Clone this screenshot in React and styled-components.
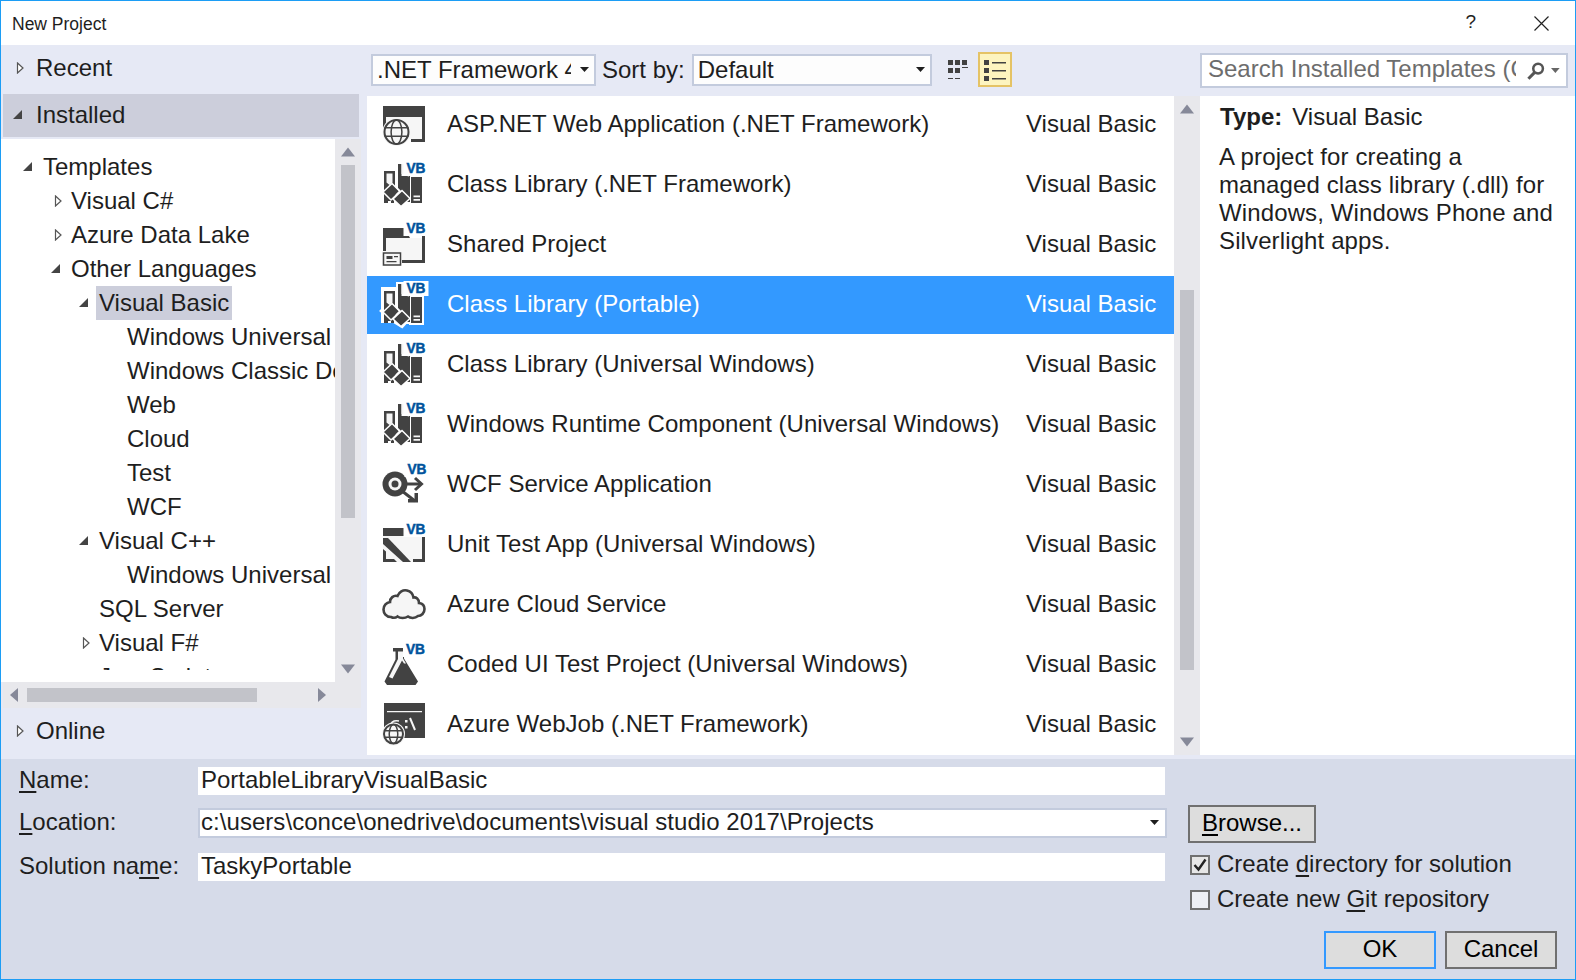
import React from "react";
import styled, { createGlobalStyle } from "styled-components";

const GlobalStyle = createGlobalStyle`
  html, body {
    margin: 0;
    padding: 0;
    background: #fff;
  }
  * {
    box-sizing: border-box;
  }
`;

const Win = styled.div`
  width: 1576px;
  height: 980px;
  border: 1px solid #1c9df5;
  background: #e6e9f5;
  display: flex;
  flex-direction: column;
  overflow: hidden;
  font-family: "Liberation Sans", Arial, sans-serif;
  font-size: 24px;
  color: #1e1e1e;
`;

const TitleBar = styled.div`
  height: 44px;
  flex: none;
  background: #fff;
  display: flex;
  align-items: center;
  padding: 0 26px 0 11px;
  font-size: 17.5px;
`;

const TitleText = styled.div`
  flex: 1;
  margin-top: 2px;
`;

const HelpMark = styled.div`
  font-size: 19px;
  margin-right: 58px;
  margin-bottom: 3px;
`;

const Main = styled.div`
  height: 714px;
  flex: none;
  display: flex;
`;

const LeftCol = styled.div`
  width: 360px;
  flex: none;
  display: flex;
  flex-direction: column;
`;

const SectionRow = styled.div`
  height: ${(p) => p.$h}px;
  flex: none;
  display: flex;
  align-items: center;
  padding-left: ${(p) => (p.$active ? 9 : 11)}px;
  padding-bottom: ${(p) => p.$pb}px;
  margin: ${(p) => (p.$active ? "0 2px 2px 2px" : "0")};
  background: ${(p) => (p.$active ? "#cccedb" : "transparent")};
`;

const HeaderSlot = styled.span`
  width: 24px;
  flex: none;
  display: flex;
  align-items: center;
`;

const TreeArea = styled.div`
  height: 543px;
  flex: none;
  display: flex;
`;

const Tree = styled.div`
  width: 334px;
  background: #fff;
  flex: none;
`;

const TreeClip = styled.div`
  height: 531px;
  overflow: hidden;
  padding-top: 11px;
  white-space: nowrap;
`;

const TreeRow = styled.div`
  height: 34px;
  display: flex;
  align-items: center;
  padding-left: ${(p) => 21 + p.$level * 28}px;
`;

const TreeSlot = styled.span`
  width: 21px;
  flex: none;
  display: flex;
  align-items: center;
`;

const TreeLabel = styled.span`
  line-height: 34px;
  background: ${(p) => (p.$selected ? "#cccedb" : "transparent")};
  padding: 0 3px;
  margin-left: -3px;
`;

const VBar = styled.div`
  width: ${(p) => p.$w}px;
  flex: none;
  background: #e8e8ec;
  display: flex;
  flex-direction: column;
  align-items: center;
`;

const BarEnd = styled.div`
  height: ${(p) => p.$h}px;
  flex: none;
  display: flex;
  align-items: center;
  justify-content: center;
`;

const BarTrack = styled.div`
  flex: 1;
  width: 100%;
  display: flex;
  flex-direction: column;
  align-items: center;
`;

const VThumb = styled.div`
  width: 14px;
  height: ${(p) => p.$h}px;
  margin-top: ${(p) => p.$top}px;
  background: #c2c3c9;
`;

const HBar = styled.div`
  height: 26px;
  flex: none;
  margin-left: 2px;
  background: #e8e8ec;
  display: flex;
  align-items: center;
  padding-left: 7px;
`;

const HThumb = styled.div`
  width: 230px;
  height: 14px;
  margin-left: 9px;
  margin-right: 61px;
  background: #c2c3c9;
`;

const MidCol = styled.div`
  width: 833px;
  flex: none;
  margin-left: 6px;
  display: flex;
  flex-direction: column;
`;

const Toolbar = styled.div`
  height: 51px;
  flex: none;
  display: flex;
  align-items: center;
  padding-bottom: 2px;
  padding-left: 4px;
`;

const Combo = styled.div`
  width: ${(p) => p.$w}px;
  height: 32px;
  flex: none;
  border: 2px solid #c3cbdd;
  background: #fdfdfd;
  display: flex;
  align-items: center;
  padding-left: 4px;
  padding-right: 5px;
  white-space: nowrap;
`;

const ComboText = styled.span`
  flex: 1;
  overflow: hidden;
  margin-right: 9px;
  line-height: 28px;
`;

const SortLabel = styled.span`
  margin: 0 7px 0 6px;
`;

const ViewIcon = styled.div`
  width: 34px;
  height: 35px;
  flex: none;
  margin-left: ${(p) => p.$ml}px;
  display: flex;
  align-items: center;
  justify-content: center;
  border: 2px solid ${(p) => (p.$on ? "#e5c365" : "transparent")};
  background: ${(p) => (p.$on ? "#fdf4bf" : "transparent")};
`;

const ListWrap = styled.div`
  height: 659px;
  flex: none;
  display: flex;
`;

const List = styled.div`
  width: 807px;
  flex: none;
  background: #fff;
  overflow: hidden;
`;

const Row = styled.div`
  height: 58px;
  margin-bottom: 2px;
  display: flex;
  align-items: center;
  padding-left: 15px;
  background: ${(p) => (p.$selected ? "#3399ff" : "transparent")};
  color: ${(p) => (p.$selected ? "#fff" : "#1e1e1e")};
`;

const RowIcon = styled.svg`
  width: 44px;
  height: 44px;
  flex: none;
  overflow: visible;
`;

const RowName = styled.div`
  width: 579px;
  flex: none;
  margin-left: 21px;
  margin-bottom: 2px;
  white-space: nowrap;
  letter-spacing: 0.03px;
`;

const RowLang = styled.div`
  white-space: nowrap;
  margin-bottom: 2px;
`;

const RightCol = styled.div`
  flex: 1;
  display: flex;
  flex-direction: column;
`;

const SearchBar = styled.div`
  height: 51px;
  flex: none;
  display: flex;
  align-items: flex-start;
  padding-top: 8px;
`;

const SearchBox = styled.div`
  width: 368px;
  height: 35px;
  border: 2px solid #c3cbdd;
  background: #fff;
  display: flex;
  align-items: center;
  padding-left: 6px;
  padding-right: 6px;
  color: #6d6d6d;
  white-space: nowrap;
`;

const SearchText = styled.span`
  width: 308px;
  flex: none;
  overflow: hidden;
  margin-right: 10px;
  line-height: 29px;
  margin-bottom: 4px;
`;

const Details = styled.div`
  height: 659px;
  flex: none;
  background: #fff;
  padding: 7px 14px 0 19px;
`;

const TypeLine = styled.div`
  height: 27px;
  line-height: 27px;
  padding-left: 1px;
  margin-bottom: 13px;
  white-space: nowrap;
`;

const TypeKey = styled.b`
  margin-right: 10px;
`;

const DescText = styled.div`
  line-height: 28px;
  letter-spacing: 0.12px;
`;

const Bottom = styled.div`
  height: 220px;
  flex: none;
  background: #d6dbe9;
  display: flex;
`;

const FormCol = styled.div`
  width: 1166px;
  flex: none;
  padding-top: 8px;
`;

const FormRow = styled.div`
  display: flex;
  align-items: center;
  height: ${(p) => p.$h}px;
  margin-top: ${(p) => p.$mt}px;
`;

const FieldLabel = styled.label`
  width: 197px;
  flex: none;
  padding-left: 18px;
  margin-bottom: 2px;
`;

const Field = styled.div`
  flex: 1;
  height: 100%;
  display: flex;
  align-items: center;
  background: #fff;
  padding-left: ${(p) => (p.$combo ? 1 : 3)}px;
  padding-right: 6px;
  padding-bottom: 2px;
  white-space: nowrap;
  letter-spacing: ${(p) => (p.$combo ? 0.05 : 0)}px;
  border: ${(p) => (p.$combo ? "2px solid #c3cbdd" : "none")};
  margin-right: ${(p) => (p.$combo ? 0 : 2)}px;
`;

const FieldText = styled.span`
  flex: 1;
`;

const ActionCol = styled.div`
  flex: 1;
  padding: 46px 18px 0 21px;
  display: flex;
  flex-direction: column;
`;

const DlgButton = styled.div`
  width: ${(p) => p.$w}px;
  height: 38px;
  flex: none;
  display: flex;
  align-items: center;
  justify-content: center;
  padding-bottom: 2px;
  background: #dddddd;
  color: #000;
  border: 2px solid ${(p) => (p.$primary ? "#3399ff" : "#707070")};
`;

const CheckRow = styled.div`
  display: flex;
  align-items: center;
  height: 20px;
  margin-top: ${(p) => p.$mt}px;
  margin-left: 2px;
  white-space: nowrap;
`;

const CheckBox = styled.span`
  width: 20px;
  height: 20px;
  flex: none;
  border: 2px solid #707070;
  background: ${(p) => (p.$on ? "#e6e6e6" : "#eef0f5")};
  margin-right: 7px;
  display: flex;
  align-items: center;
  justify-content: center;
`;

const CheckText = styled.span`
  margin-bottom: 2px;
`;

const ButtonRow = styled.div`
  display: flex;
  justify-content: flex-end;
  gap: 9px;
  margin-top: 21px;
`;

const Ul = styled.span`
  text-decoration: underline;
  text-underline-offset: 3px;
`;

const DARK = "#424242";
const LIGHT = "#f6f6f6";
const BLUE = "#00539c";

function Caret({ open }) {
  return (
    <svg width="12" height="12" viewBox="0 0 12 12">
      {open ? (
        <polygon points="10,1 10,10 1,10" fill="#444" />
      ) : (
        <polygon points="5.5,1 11,6 5.5,11" fill="#fff" stroke="#555" strokeWidth="1.2" />
      )}
    </svg>
  );
}

function DownCaret() {
  return (
    <svg width="9" height="5" viewBox="0 0 9 5">
      <polygon points="0,0 9,0 4.5,5" fill="#1e1e1e" />
    </svg>
  );
}

function ArrowGlyph({ dir }) {
  if (dir === "left" || dir === "right") {
    return (
      <svg width="8" height="14" viewBox="0 0 8 14">
        <polygon points={dir === "left" ? "8,0 8,14 0,7" : "0,0 8,7 0,14"} fill="#868999" />
      </svg>
    );
  }
  return (
    <svg width="14" height="10" viewBox="0 0 14 9">
      <polygon points={dir === "up" ? "7,0 14,9 0,9" : "0,0 14,0 7,9"} fill="#868999" />
    </svg>
  );
}

function VBBadge({ x = 24.5, y = 10, halo = "#fff" }) {
  return (
    <g>
      <rect x={x - 3} y={y - 12} width="25" height="15" fill={halo} />
      <text
        x={x}
        y={y}
        fontFamily="Liberation Sans, sans-serif"
        fontWeight="700"
        fontSize="14"
        fill={BLUE}
        stroke={BLUE}
        strokeWidth="0.5"
        textLength="19"
        lengthAdjust="spacingAndGlyphs"
      >
        VB
      </text>
    </g>
  );
}

function ClassLibIcon({ selected }) {
  return (
    <RowIcon viewBox="0 0 44 44">
      {selected && (
        <g fill="#fff" stroke="#fff" strokeWidth="4">
          <path d="M1 6h12v32H1z" />
          <path d="M16 1h12v38H16z" />
          <path d="M29 13h11v27H29z" />
          <path d="M0 28l10-10 8 7 11 8-9 10-10-6z" />
        </g>
      )}
      <path d="M2 8h11v30H2z" fill={DARK} />
      <path d="M4.5 10.5h6v9l-3 2.5-3-2.5z" fill={LIGHT} />
      <path d="M16 1h3.5v12H28v26H16z" fill={DARK} />
      <path d="M19.5 1h7l0 13-3-3h-4z" fill={LIGHT} />
      <path d="M29 14h11v26H29z" fill={DARK} />
      <path d="M31.5 32.5h6.5v1.7h-6.500zM31.5 36h6.5v1.7h-6.500z" fill={LIGHT} />
      <path d="M1 29l9-8.500 8 8-9 8.500z" fill={DARK} stroke="#fff" strokeWidth="1.5" />
      <path d="M11 36l9-8.500 8 8-9 8z" fill={DARK} stroke="#fff" strokeWidth="1.5" />
      <path d="M14 24l4 4-4 4" fill="none" stroke="#fff" strokeWidth="1.5" />
      <path d="M2 37h4v3H2zM9 38h3v2H9z" fill={DARK} />
      <VBBadge />
    </RowIcon>
  );
}

function Globe({ cx, cy, r }) {
  return (
    <g>
      <circle cx={cx} cy={cy} r={r + 2} fill={LIGHT} />
      <circle cx={cx} cy={cy} r={r} fill={LIGHT} stroke={DARK} strokeWidth="2" />
      <ellipse cx={cx} cy={cy} rx={r * 0.45} ry={r} fill="none" stroke={DARK} strokeWidth="1.5" />
      <path
        d={`M${cx - r} ${cy - r * 0.35}h${2 * r}M${cx - r} ${cy + r * 0.35}h${2 * r}`}
        stroke={DARK}
        strokeWidth="1.5"
      />
    </g>
  );
}

function WebIcon() {
  return (
    <RowIcon viewBox="0 0 44 44">
      <path d="M1 3h42v36H29v-3h11V14H4v12H1z" fill={DARK} />
      <path d="M4 14h36v22H4z" fill={LIGHT} />
      <Globe cx={14.5} cy={29} r={12} />
    </RowIcon>
  );
}

function SharedIcon() {
  return (
    <RowIcon viewBox="0 0 44 44">
      <path d="M1 5h24v4l3 6H1zM1 15h3v15H1zM40 13h3v27H19v-3h21z" fill={DARK} />
      <path d="M4 15h36v22H4z" fill={LIGHT} />
      <rect x="0" y="28" width="20" height="15" fill={LIGHT} />
      <rect x="1.5" y="30" width="17" height="12" fill="none" stroke={DARK} strokeWidth="1.5" />
      <path d="M4.5 33h6v3h-6zM4.5 38h10v1.2h-10zM12 33h4v1.2h-4z" fill={DARK} />
      <VBBadge y={10} />
    </RowIcon>
  );
}

function WcfIcon() {
  return (
    <RowIcon viewBox="0 0 44 44">
      <path d="M22 21h16" stroke={DARK} strokeWidth="3" />
      <path d="M33 15l6.5 6-6.5 6" fill="none" stroke={DARK} strokeWidth="3" />
      <path d="M20 28l13 10" stroke={DARK} strokeWidth="3" />
      <path d="M26 39.5h10v-9.5h-3.5v6H26z" fill={DARK} />
      <circle cx="13" cy="21" r="12.5" fill={DARK} />
      <circle cx="13" cy="21" r="6.5" fill={LIGHT} />
      <circle cx="13" cy="21" r="3.5" fill={DARK} />
      <VBBadge x={25.5} y={11} />
    </RowIcon>
  );
}

function UnitTestIcon() {
  return (
    <RowIcon viewBox="0 0 44 44">
      <path d="M1 5h42v34H1z" fill={LIGHT} />
      <path d="M1 5h25v8H1zM26 9h17v3H26z" fill={DARK} />
      <path d="M40 12h3v27H31v-3h9z" fill={DARK} />
      <path d="M1 15l5 0 23 24h-8L1 21z" fill={DARK} />
      <path d="M1 26l3 2.5v7.5h8l3 3H1z" fill={DARK} />
      <VBBadge y={11} />
    </RowIcon>
  );
}

function CloudIcon() {
  return (
    <RowIcon viewBox="0 0 44 44">
      <path
        d="M9 34C4 34 1.5 30 1.5 26.5C1.5 22.5 4.5 19.5 8 19C8 15 11.5 12 15.5 13C17 9 21 6.5 25 7.5C29 8.5 31 11.5 31.5 14.5C34 14 37 16 37 20C40.5 20.5 42.5 23 42.5 26C42.5 30 39.5 33 36 33C33 35.5 28.5 35.5 26 33.5C23 35.5 18 35.5 15.5 33.5C13.5 35 11 35 9 34z"
        fill={LIGHT}
        stroke={DARK}
        strokeWidth="2.6"
      />
    </RowIcon>
  );
}

function FlaskIcon() {
  return (
    <RowIcon viewBox="0 0 44 44">
      <path d="M11 5h13v3.5h-2v7l14 23-2.500 3.5H5L2.500 38.5l11-22V8.5H11z" fill={DARK} />
      <path d="M16 8.5h5v7l3 5-2 0-2-3-9.500 18-3.500-1.500 9-18z" fill={LIGHT} />
      <VBBadge x={24} y={11} />
    </RowIcon>
  );
}

function WebJobIcon() {
  return (
    <RowIcon viewBox="0 0 44 44">
      <rect x="2" y="0" width="41" height="35" fill={DARK} />
      <path d="M5 8h35v1.2H5z" fill={LIGHT} />
      <path d="M23 17h2.5v2.5H23zM23 23h2.5v2.5H23z" fill={LIGHT} />
      <path d="M28 15l5 12" stroke={LIGHT} strokeWidth="2" />
      <path d="M8 23c1-4 4-6 9-5" fill="none" stroke={LIGHT} strokeWidth="1.6" />
      <Globe cx={11.5} cy={31} r={9.5} />
    </RowIcon>
  );
}

const TREE = [
  { label: "Templates", level: 0, open: true },
  { label: "Visual C#", level: 1, closed: true },
  { label: "Azure Data Lake", level: 1, closed: true },
  { label: "Other Languages", level: 1, open: true },
  { label: "Visual Basic", level: 2, open: true, selected: true },
  { label: "Windows Universal", level: 3 },
  { label: "Windows Classic Desktop", level: 3 },
  { label: "Web", level: 3 },
  { label: "Cloud", level: 3 },
  { label: "Test", level: 3 },
  { label: "WCF", level: 3 },
  { label: "Visual C++", level: 2, open: true },
  { label: "Windows Universal", level: 3 },
  { label: "SQL Server", level: 2 },
  { label: "Visual F#", level: 2, closed: true },
  { label: "JavaScript", level: 2, closed: true },
];

const TEMPLATES = [
  { name: "ASP.NET Web Application (.NET Framework)", Icon: WebIcon },
  { name: "Class Library (.NET Framework)", Icon: ClassLibIcon },
  { name: "Shared Project", Icon: SharedIcon },
  { name: "Class Library (Portable)", Icon: ClassLibIcon, selected: true },
  { name: "Class Library (Universal Windows)", Icon: ClassLibIcon },
  { name: "Windows Runtime Component (Universal Windows)", Icon: ClassLibIcon },
  { name: "WCF Service Application", Icon: WcfIcon },
  { name: "Unit Test App (Universal Windows)", Icon: UnitTestIcon },
  { name: "Azure Cloud Service", Icon: CloudIcon },
  { name: "Coded UI Test Project (Universal Windows)", Icon: FlaskIcon },
  { name: "Azure WebJob (.NET Framework)", Icon: WebJobIcon },
];

export default function App() {
  return (
    <>
      <GlobalStyle />
      <Win>
        <TitleBar>
          <TitleText>New Project</TitleText>
          <HelpMark>?</HelpMark>
          <svg width="15" height="15" viewBox="0 0 15 15">
            <path d="M0.5 0.5l14 14M14.5 0.5l-14 14" stroke="#222" strokeWidth="1.2" />
          </svg>
        </TitleBar>
        <Main>
          <LeftCol>
            <SectionRow $h={49} $pb={3}>
              <HeaderSlot>
                <Caret />
              </HeaderSlot>
              Recent
            </SectionRow>
            <SectionRow $h={43} $pb={2} $active>
              <HeaderSlot>
                <Caret open />
              </HeaderSlot>
              Installed
            </SectionRow>
            <TreeArea>
              <Tree>
                <TreeClip>
                  {TREE.map((t, i) => (
                    <TreeRow key={i} $level={t.level}>
                      <TreeSlot>
                        {t.open && <Caret open />}
                        {t.closed && <Caret />}
                      </TreeSlot>
                      <TreeLabel $selected={t.selected}>{t.label}</TreeLabel>
                    </TreeRow>
                  ))}
                </TreeClip>
              </Tree>
              <VBar $w={26}>
                <BarEnd $h={26}>
                  <ArrowGlyph dir="up" />
                </BarEnd>
                <BarTrack>
                  <VThumb $top={0} $h={353} />
                </BarTrack>
                <BarEnd $h={26}>
                  <ArrowGlyph dir="down" />
                </BarEnd>
              </VBar>
            </TreeArea>
            <HBar>
              <ArrowGlyph dir="left" />
              <HThumb />
              <ArrowGlyph dir="right" />
            </HBar>
            <SectionRow $h={51} $pb={6}>
              <HeaderSlot>
                <Caret />
              </HeaderSlot>
              Online
            </SectionRow>
          </LeftCol>
          <MidCol>
            <Toolbar>
              <Combo $w={225}>
                <ComboText>.NET Framework 4.6.1</ComboText>
                <DownCaret />
              </Combo>
              <SortLabel>Sort by:</SortLabel>
              <Combo $w={240}>
                <ComboText>Default</ComboText>
                <DownCaret />
              </Combo>
              <ViewIcon $ml={9}>
                <svg width="22" height="22" viewBox="0 0 22 22">
                  <path
                    d="M1 1h5v5H1zM8 1h5v5H8zM15 1h5v5h-5zM1 9h5v5H1zM8 9h5v5H8zM15 8h6v1h-6zM1 19h5v1H1zM8 19h5v1H8z"
                    fill="#424242"
                  />
                </svg>
              </ViewIcon>
              <ViewIcon $ml={3} $on>
                <svg width="22" height="22" viewBox="0 0 22 22">
                  <path
                    d="M0 1h5v5H0zM0 9h5v5H0zM0 17h5v5H0zM8 3h14v1.5H8zM8 11h14v1.5H8zM8 19h14v1.5H8z"
                    fill="#424242"
                  />
                </svg>
              </ViewIcon>
            </Toolbar>
            <ListWrap>
              <List>
                {TEMPLATES.map((t) => (
                  <Row key={t.name} $selected={t.selected}>
                    <t.Icon selected={t.selected} />
                    <RowName>{t.name}</RowName>
                    <RowLang>Visual Basic</RowLang>
                  </Row>
                ))}
              </List>
              <VBar $w={26}>
                <BarEnd $h={26}>
                  <ArrowGlyph dir="up" />
                </BarEnd>
                <BarTrack>
                  <VThumb $top={168} $h={380} />
                </BarTrack>
                <BarEnd $h={26}>
                  <ArrowGlyph dir="down" />
                </BarEnd>
              </VBar>
            </ListWrap>
          </MidCol>
          <RightCol>
            <SearchBar>
              <SearchBox>
                <SearchText>Search Installed Templates (Ctrl+E)</SearchText>
                <svg width="20" height="20" viewBox="0 0 20 20">
                  <circle cx="12.5" cy="7.5" r="5" fill="none" stroke="#555" strokeWidth="2.6" />
                  <path d="M9 11.5L2.5 18" stroke="#555" strokeWidth="3.2" />
                </svg>
                <svg width="9" height="5" viewBox="0 0 9 5" style={{ marginLeft: 6 }}>
                  <polygon points="0,0 9,0 4.5,5" fill="#666" />
                </svg>
              </SearchBox>
            </SearchBar>
            <Details>
              <TypeLine>
                <TypeKey>Type:</TypeKey>Visual Basic
              </TypeLine>
              <DescText>
                A project for creating a
                <br />
                managed class library (.dll) for
                <br />
                Windows, Windows Phone and
                <br />
                Silverlight apps.
              </DescText>
            </Details>
          </RightCol>
        </Main>
        <Bottom>
          <FormCol>
            <FormRow $h={28} $mt={0}>
              <FieldLabel>
                <Ul>N</Ul>ame:
              </FieldLabel>
              <Field>PortableLibraryVisualBasic</Field>
            </FormRow>
            <FormRow $h={30} $mt={13}>
              <FieldLabel>
                <Ul>L</Ul>ocation:
              </FieldLabel>
              <Field $combo>
                <FieldText>c:\users\conce\onedrive\documents\visual studio 2017\Projects</FieldText>
                <DownCaret />
              </Field>
            </FormRow>
            <FormRow $h={28} $mt={15}>
              <FieldLabel>
                Solution na<Ul>m</Ul>e:
              </FieldLabel>
              <Field>TaskyPortable</Field>
            </FormRow>
          </FormCol>
          <ActionCol>
            <DlgButton $w={128}>
              <span>
                <Ul>B</Ul>rowse...
              </span>
            </DlgButton>
            <CheckRow $mt={12}>
              <CheckBox $on>
                <svg width="14" height="14" viewBox="0 0 14 14">
                  <path d="M1.5 7l4 4.5 7-10" fill="none" stroke="#222" strokeWidth="2.4" />
                </svg>
              </CheckBox>
              <CheckText>
                Create <Ul>d</Ul>irectory for solution
              </CheckText>
            </CheckRow>
            <CheckRow $mt={15}>
              <CheckBox />
              <CheckText>
                Create new <Ul>G</Ul>it repository
              </CheckText>
            </CheckRow>
            <ButtonRow>
              <DlgButton $w={112} $primary>
                OK
              </DlgButton>
              <DlgButton $w={112}>Cancel</DlgButton>
            </ButtonRow>
          </ActionCol>
        </Bottom>
      </Win>
    </>
  );
}
